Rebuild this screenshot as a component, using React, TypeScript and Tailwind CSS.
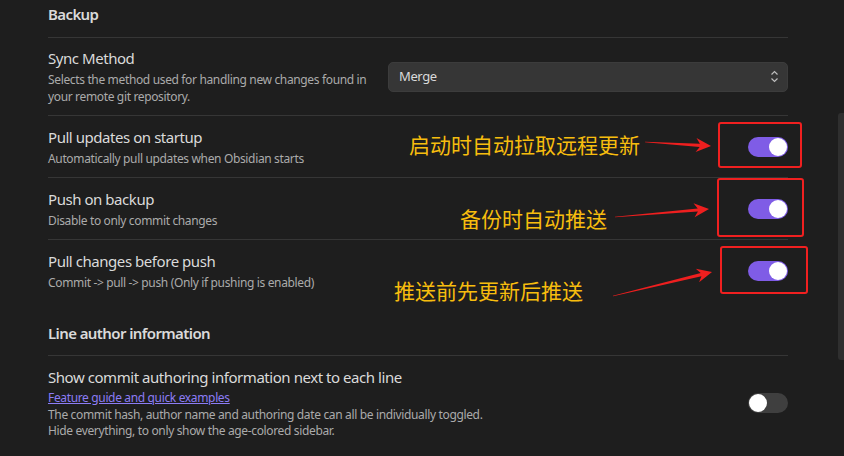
import React from "react";

const font = { fontFamily: '"Noto Sans", "Open Sans", sans-serif' };

function Toggle({ on }: { on: boolean }) {
  return (
    <div
      className={`relative w-[40px] h-[20px] rounded-full shrink-0 ${
        on ? "bg-[#7f5ce6]" : "bg-[#3f3f3f]"
      }`}
    >
      <div
        className={`absolute top-[1px] w-[18px] h-[18px] rounded-full bg-white ${
          on ? "right-[1px]" : "left-[1px]"
        }`}
      />
    </div>
  );
}

function Row({
  title,
  children,
  control,
}: {
  title: string;
  children: React.ReactNode;
  control: React.ReactNode;
}) {
  return (
    <div className="flex items-center border-t border-[#363636] pt-[11px] pb-[10px]">
      <div className="flex-1 min-w-0">
        <div className="text-[15px] leading-[20px] tracking-[-0.45px] text-[#dadada]">{title}</div>
        <div className="pt-[3px] text-[12px] leading-[17px] tracking-[-0.35px] text-[#ababab]">{children}</div>
      </div>
      {control}
    </div>
  );
}

function Arrow({ x1, y1, x2, y2 }: { x1: number; y1: number; x2: number; y2: number }) {
  const dx = x2 - x1;
  const dy = y2 - y1;
  const len = Math.hypot(dx, dy);
  const ux = dx / len;
  const uy = dy / len;
  const nx = -uy;
  const ny = ux;
  const headLen = 15;
  const headW = 7;
  const shaftW = 1.6;
  const bx = x2 - ux * headLen * 0.75;
  const by = y2 - uy * headLen * 0.75;
  const wx = x2 - ux * headLen;
  const wy = y2 - uy * headLen;
  const pts = [
    [x1 + nx * 0.3, y1 + ny * 0.3],
    [bx + nx * shaftW, by + ny * shaftW],
    [wx + nx * headW, wy + ny * headW],
    [x2, y2],
    [wx - nx * headW, wy - ny * headW],
    [bx - nx * shaftW, by - ny * shaftW],
    [x1 - nx * 0.3, y1 - ny * 0.3],
  ]
    .map((p) => `${p[0].toFixed(1)},${p[1].toFixed(1)}`)
    .join(" ");
  return <polygon points={pts} fill="#ee1f1f" />;
}

export default function App() {
  return (
    <div
      className="relative w-[844px] h-[456px] bg-[#1e1e1e] overflow-hidden flex"
      style={font}
    >
      <div className="w-[838px] pl-[48px] pr-[50px]">
        {/* Backup heading */}
        <div className="pt-[4px] pb-[13px] text-[15px] leading-[20px] font-semibold tracking-[-0.6px] text-[#dadada]">
          Backup
        </div>

        {/* Sync Method */}
        <div className="flex items-center border-t border-[#363636] pt-[10px] pb-[10px]">
          <div className="w-[320px] mr-[20px]">
            <div className="text-[15px] leading-[20px] tracking-[-0.45px] text-[#dadada]">Sync Method</div>
            <div className="pt-[3px] text-[12px] leading-[17px] tracking-[-0.35px] text-[#ababab] whitespace-nowrap">
              Selects the method used for handling new changes found in
              <br />
              your remote git repository.
            </div>
          </div>
          <div className="w-[400px] h-[30px] rounded-[5px] bg-[#363636] border border-[#3c3c3c] flex items-center justify-between pl-[10px] pr-[8px]">
            <span className="text-[13px] tracking-[-0.4px] text-[#dadada]">Merge</span>
            <svg width="9" height="13" viewBox="0 0 9 13" fill="none" stroke="#bdbdbd" strokeWidth="1.2">
              <path d="M1.5 4.5 L4.5 1.5 L7.5 4.5" />
              <path d="M1.5 8.5 L4.5 11.5 L7.5 8.5" />
            </svg>
          </div>
        </div>

        <Row title="Pull updates on startup" control={<Toggle on />}>
          Automatically pull updates when Obsidian starts
        </Row>
        <Row title="Push on backup" control={<Toggle on />}>
          Disable to only commit changes
        </Row>
        <Row title="Pull changes before push" control={<Toggle on />}>
          Commit -&gt; pull -&gt; push (Only if pushing is enabled)
        </Row>

        {/* Line author heading */}
        <div className="pt-[22px] pb-[12px] text-[15px] leading-[20px] font-semibold tracking-[-0.6px] text-[#dadada]">
          Line author information
        </div>

        <div className="flex items-center border-t border-[#363636] pt-[11px] pb-[11px]">
          <div className="flex-1 min-w-0">
            <div className="text-[15px] leading-[20px] tracking-[-0.45px] text-[#dadada]">
              Show commit authoring information next to each line
            </div>
            <div className="pt-[3px] text-[12px] leading-[16.5px] tracking-[-0.35px] text-[#ababab]">
              <span className="text-[#8c7cf5] underline">Feature guide and quick examples</span>
              <br />
              The commit hash, author name and authoring date can all be individually toggled.
              <br />
              Hide everything, to only show the age-colored sidebar.
            </div>
          </div>
          <Toggle on={false} />
        </div>
      </div>

      {/* scrollbar */}
      <div className="w-[6px]">
        <div className="mt-[113px] h-[247px] rounded-l-[3px] bg-[#2f2f2f]" />
      </div>

      {/* annotation boxes */}
      <div className="absolute left-[718px] top-[122px] w-[84px] h-[46px] border-[2.5px] border-[#f02020] rounded-[3px]" />
      <div className="absolute left-[717px] top-[178px] w-[87px] h-[59px] border-[2.5px] border-[#f02020] rounded-[3px]" />
      <div className="absolute left-[720px] top-[246px] w-[88px] h-[48px] border-[2.5px] border-[#f02020] rounded-[3px]" />

      {/* annotation labels */}
      <div
        className="absolute left-[409px] top-[132px] text-[21px] leading-[24px] text-[#f7bd0e] whitespace-nowrap"
        style={{ fontFamily: '"Noto Sans CJK SC", sans-serif' }}
      >
        启动时自动拉取远程更新
      </div>
      <div
        className="absolute left-[460px] top-[206px] text-[21px] leading-[24px] text-[#f7bd0e] whitespace-nowrap"
        style={{ fontFamily: '"Noto Sans CJK SC", sans-serif' }}
      >
        备份时自动推送
      </div>
      <div
        className="absolute left-[394px] top-[278px] text-[21px] leading-[24px] text-[#f7bd0e] whitespace-nowrap"
        style={{ fontFamily: '"Noto Sans CJK SC", sans-serif' }}
      >
        推送前先更新后推送
      </div>

      {/* arrows */}
      <svg className="absolute left-0 top-0 pointer-events-none" width="844" height="456">
        <Arrow x1={645} y1={142} x2={711} y2={146} />
        <Arrow x1={615} y1={217} x2={709} y2={209} />
        <Arrow x1={613} y1={296} x2={712} y2={272} />
      </svg>
    </div>
  );
}
